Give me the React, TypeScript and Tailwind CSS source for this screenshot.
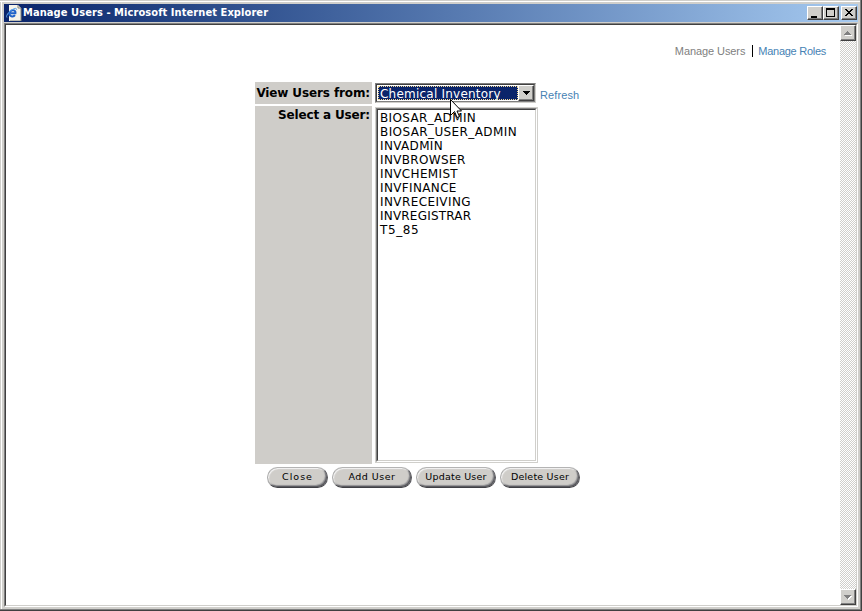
import React from "react";

const users = [
  { name: "BIOSAR_ADMIN", spacing: "tracking-[0.35px]" },
  { name: "BIOSAR_USER_ADMIN", spacing: "tracking-[0.4px]" },
  { name: "INVADMIN", spacing: "tracking-[0.35px]" },
  { name: "INVBROWSER", spacing: "tracking-[0.35px]" },
  { name: "INVCHEMIST", spacing: "tracking-[0.35px]" },
  { name: "INVFINANCE", spacing: "tracking-[0.35px]" },
  { name: "INVRECEIVING", spacing: "tracking-[0.4px]" },
  { name: "INVREGISTRAR", spacing: "tracking-[0.2px]" },
  { name: "T5_85", spacing: "tracking-[0.6px]" },
];

const raised =
  "border border-t-white border-l-white border-r-[#404040] border-b-[#404040] bg-[#d0cfcb] shadow-[inset_-1px_-1px_0_#808080]";

const checker =
  "bg-[conic-gradient(#fff_25%,#d0cfcb_0_50%,#fff_0_75%,#d0cfcb_0)] bg-[length:2px_2px]";

function Titlebar() {
  return (
    <header className="flex h-[18px] shrink-0 items-center bg-linear-to-r from-[#0a246a] to-[#a6caf0] pr-[1px] pl-[2px]">
      <svg width="16" height="16" viewBox="0 0 16 16" className="shrink-0">
        <path d="M3 0h9l3 3v13H3z" fill="#f4f3ea" />
        <path d="M12 0v3h3M15 3v13H4" fill="none" stroke="#85847a" />
        <path d="M9 10.2C8.2 11.2 6.8 11.6 5.4 11.2 3.2 10.5 2.8 8.5 4 6.9 5.5 4.9 8.6 4.8 9.3 6.6c.2.5.2 1.1.1 1.6H4.5" fill="none" stroke="#1d62c9" strokeWidth="2" />
        <path d="M.9 12.5C-.7 10.5 4.6 4.4 9 3.4c1.3-.2 1.7.4 1.4 1.4" fill="none" stroke="#5ba4ee" />
      </svg>
      <h1 className="ml-[1px] whitespace-nowrap font-['DejaVu_Sans_Condensed','DejaVu_Sans',sans-serif] text-[11px] leading-[18px] font-bold tracking-[0.08px] text-white">
        Manage Users - Microsoft Internet Explorer
      </h1>
      <div className="ml-auto flex">
        <button aria-label="Minimize" className={`h-[14px] w-[16px] ${raised}`}>
          <svg width="14" height="12" shapeRendering="crispEdges"><path d="M3 9h6v2H3z" /></svg>
        </button>
        <button aria-label="Maximize" className={`h-[14px] w-[16px] ${raised}`}>
          <svg width="14" height="12" shapeRendering="crispEdges"><path d="M2 1h9v9H2zM3 3v6h7V3z" fillRule="evenodd" /></svg>
        </button>
        <button aria-label="Close window" className={`ml-[2px] h-[14px] w-[16px] ${raised}`}>
          <svg width="14" height="12" shapeRendering="crispEdges"><path d="M3 2h2v1h1v1h2V3h1V2h2v1h-1v1H9v1H8v1h1v1h1v1h1v1H9V8H8V7H6v1H5v1H3V8h1V7h1V6h1V5H5V4H4V3H3z" /></svg>
        </button>
      </div>
    </header>
  );
}

function Scrollbar() {
  return (
    <div className={`flex w-4 shrink-0 flex-col justify-between ${checker}`}>
      <div className={`h-4 w-4 ${raised}`}>
        <svg width="14" height="14" shapeRendering="crispEdges">
          <path d="M7 6h1v1h1v1h1v1h1v1H4V9h1V8h1V7h1z" fill="#fff" />
          <path d="M6 5h1v1h1v1h1v1h1v1H3V8h1V7h1V6h1z" fill="#808080" />
        </svg>
      </div>
      <div className={`h-4 w-4 ${raised}`}>
        <svg width="14" height="14" shapeRendering="crispEdges">
          <path d="M4 6h7v1h-1v1H9v1H8v1H7V9H6V8H5V7H4z" fill="#fff" />
          <path d="M3 5h7v1H9v1H8v1H7v1H6V8H5V7H4V6H3z" fill="#808080" />
        </svg>
      </div>
    </div>
  );
}

function PillButton({ label, size, text }: { label: string; size: string; text: string }) {
  return (
    <button
      className={`h-[21px] shrink-0 rounded-full border border-t-[#b4b4b4] border-l-[#aaa] border-r-[#55555a] border-b-[#404045] bg-[#cfcdc9] pb-[2px] text-center font-['DejaVu_Sans',sans-serif] text-[9.5px] leading-[17px] whitespace-nowrap text-black shadow-[inset_1px_1px_1px_#f4f4f4,inset_-1px_-1px_1px_#55555a,inset_-2px_-2px_1px_#99999b] ${size}`}
    >
      <span className={text}>{label}</span>
    </button>
  );
}

export default function App() {
  return (
    <div className="h-[611px] w-[862px] overflow-hidden border-r border-b border-[#404040] bg-[#d0cfcb]">
      <div className="flex h-[610px] w-[861px] flex-col border-r border-b border-[#808080] pt-[1px]">
        <div className="flex h-[608px] w-[860px] flex-col border-t border-white pl-[1px]">
          <div className="flex h-[607px] flex-col border-l border-white pt-[2px] pr-[2px] pb-[2px] pl-[2px]">
            <Titlebar />
            <div className="mt-[1px] flex min-h-0 flex-1 border border-t-[#808080] border-l-[#808080] border-r-white border-b-white">
              <div className="flex min-w-0 flex-1 border border-t-[#404040] border-l-[#404040] border-r-[#d0cfcb] border-b-[#d0cfcb]">
                <main className="min-w-0 flex-1 bg-white">
                  <nav className="flex h-[57px] items-start justify-end pt-[20px] pr-[14px] font-['Liberation_Sans',Arial,sans-serif] text-[11px] leading-[13px]">
                    <span className="tracking-[-0.09px] text-[#808080]">Manage Users</span>
                    <span className="mr-[5px] ml-[7px] h-3 w-[1px] bg-black" />
                    <a className="tracking-[-0.27px] text-[#4682b4]">Manage Roles</a>
                  </nav>
                  <form className="ml-[249px] w-[330px] font-['DejaVu_Sans',sans-serif]">
                    <div className="flex h-[22px]">
                      <label className="w-[117px] bg-[#cfcdc9] pr-[2px] text-right text-[12px] leading-[23px] font-bold tracking-[-0.12px] whitespace-nowrap">
                        View Users from:
                      </label>
                      <div className="relative mt-[1px] ml-[3px] flex h-[20px] w-[161px] border border-t-[#808080] border-l-[#808080] border-r-[#d0cfcb] border-b-[#d0cfcb]">
                        <div className="flex flex-1 border border-t-[#404040] border-l-[#404040] border-r-[#808080] border-b-[#808080] pt-[1px] pb-[1px] pl-[1px]">
                          <span className="h-[14px] w-[140px] border border-dotted border-[#f5db95] bg-[#0a246a] pl-[1px] text-[12px] leading-[14px] tracking-[0.22px] whitespace-nowrap text-white">
                            Chemical Inventory
                          </span>
                          <span className={`-my-[1px] ml-auto h-4 w-4 ${raised}`}>
                            <svg width="14" height="14" shapeRendering="crispEdges"><path d="M4 5h7v1h-1v1H9v1H8v1H7V8H6V7H5V6H4z" /></svg>
                          </span>
                        </div>
                        <svg className="absolute top-[14px] left-[73px] z-10" width="13" height="22" viewBox="0 0 13 22">
                          <path d="M1.5 1.5v16l4-4 2.5 6 2.5-1-2.5-5.5h4.5z" fill="#fff" stroke="#000" />
                        </svg>
                      </div>
                      <a className="ml-[4px] pt-[6px] font-['Liberation_Sans',Arial,sans-serif] text-[11px] leading-[14px] tracking-[0.1px] text-[#4682b4]">Refresh</a>
                    </div>
                    <div className="mt-[2px] flex h-[358px]">
                      <label className="w-[117px] bg-[#cfcdc9] pr-[2px] text-right text-[12px] leading-[18px] font-bold tracking-[-0.15px] whitespace-nowrap">
                        Select a User:
                      </label>
                      <div className="mt-[1px] ml-[3px] h-[356px] w-[163px] border border-[#d0cfcb]">
                        <div className="h-full border border-t-[#808080] border-l-[#808080] border-r-white border-b-white">
                          <ul className="h-full border border-t-[#404040] border-l-[#404040] border-r-[#d0cfcb] border-b-[#d0cfcb] pt-[1px] pl-[2px] text-[12px] leading-[14px] text-black">
                            {users.map((u) => (
                              <li key={u.name} className={`h-[14px] whitespace-nowrap ${u.spacing}`}>{u.name}</li>
                            ))}
                          </ul>
                        </div>
                      </div>
                    </div>
                    <div className="mt-[3px] ml-[12px] flex gap-1">
                      <PillButton label="Close" size="w-[61px]" text="tracking-[1px]" />
                      <PillButton label="Add User" size="w-[80px]" text="tracking-[0.5px]" />
                      <PillButton label="Update User" size="w-[80px]" text="tracking-[0.2px]" />
                      <PillButton label="Delete User" size="w-[80px]" text="tracking-[0.2px]" />
                    </div>
                  </form>
                </main>
                <Scrollbar />
              </div>
            </div>
          </div>
        </div>
      </div>
    </div>
  );
}
